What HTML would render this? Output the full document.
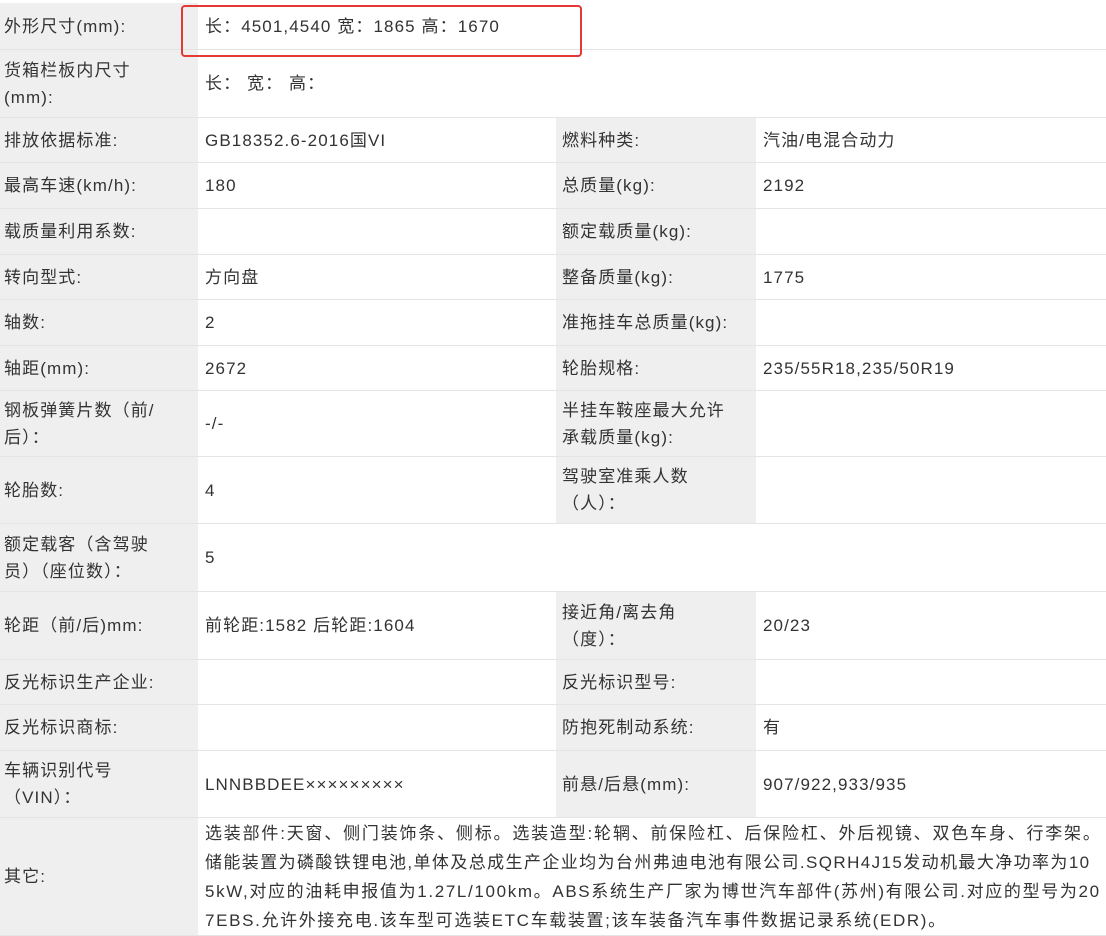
<!DOCTYPE html><html><head><meta charset="utf-8"><style>
body{margin:0;width:1106px;height:936px;background:#fff;position:relative;overflow:hidden;font-family:"Liberation Sans","Noto Sans CJK SC",sans-serif;font-size:17px;letter-spacing:1.1px;color:#333}
.c{position:absolute;display:flex;align-items:center;box-sizing:border-box;line-height:27px;border-bottom:1px solid #e4e4e4;white-space:nowrap}
.g{background:#efefef;padding-left:4px}
.w{background:#fff;padding-left:7px}
.r{position:absolute;left:181px;top:5px;width:401px;height:52px;border:2px solid #e53935;border-radius:4px;box-sizing:border-box}
</style></head><body>
<div id="t"></div>
<script>
var rows=[
[3,50,"外形尺寸(mm):","长：4501,4540 宽：1865 高：1670"],
[50,118,"货箱栏板内尺寸<br>(mm):","长： 宽： 高："],
[118,163,"排放依据标准:","GB18352.6-2016国VI","燃料种类:","汽油/电混合动力"],
[163,209,"最高车速(km/h):","180","总质量(kg):","2192"],
[209,255,"载质量利用系数:","","额定载质量(kg):",""],
[255,300,"转向型式:","方向盘","整备质量(kg):","1775"],
[300,346,"轴数:","2","准拖挂车总质量(kg):",""],
[346,391,"轴距(mm):","2672","轮胎规格:","235/55R18,235/50R19"],
[391,457,"钢板弹簧片数（前/<br>后）：","-/-","半挂车鞍座最大允许<br>承载质量(kg):",""],
[457,524,"轮胎数:","4","驾驶室准乘人数<br>（人）：",""],
[524,592,"额定载客（含驾驶<br>员）（座位数）：","5"],
[592,660,"轮距（前/后)mm:","前轮距:1582 后轮距:1604","接近角/离去角<br>（度）：","20/23"],
[660,705,"反光标识生产企业:","","反光标识型号:",""],
[705,751,"反光标识商标:","","防抱死制动系统:","有"],
[751,818,"车辆识别代号<br>（VIN）：","LNNBBDEE×××××××××","前悬/后悬(mm):","907/922,933/935"],
[818,936,"其它:","<div style='line-height:29px;letter-spacing:0'><div style='letter-spacing:1.8px'>选装部件:天窗、侧门装饰条、侧标。选装造型:轮辋、前保险杠、后保险杠、外后视镜、双色车身、行李架。</div><div style='letter-spacing:1.4px'>储能装置为磷酸铁锂电池,单体及总成生产企业均为台州弗迪电池有限公司.SQRH4J15发动机最大净功率为10</div><div style='letter-spacing:1.65px'>5kW,对应的油耗申报值为1.27L/100km。ABS系统生产厂家为博世汽车部件(苏州)有限公司.对应的型号为20</div><div style='letter-spacing:1.65px'>7EBS.允许外接充电.该车型可选装ETC车载装置;该车装备汽车事件数据记录系统(EDR)。</div></div>"]];
var h="";
rows.forEach(function(r){var t=r[0],H=r[1]-r[0];
h+='<div class="c g" style="left:0;top:'+t+'px;width:198px;height:'+H+'px">'+r[2]+'</div>';
if(r.length>4){
h+='<div class="c w" style="left:198px;top:'+t+'px;width:358px;height:'+H+'px">'+r[3]+'</div>';
h+='<div class="c g" style="left:556px;top:'+t+'px;width:200px;height:'+H+'px;padding-left:6px">'+r[4]+'</div>';
h+='<div class="c w" style="left:756px;top:'+t+'px;width:350px;height:'+H+'px">'+r[5]+'</div>';
}else{
h+='<div class="c w" style="left:198px;top:'+t+'px;width:908px;height:'+H+'px;overflow:hidden">'+r[3]+'</div>';}
});
document.getElementById("t").innerHTML=h+'<div class="r"></div>';
</script>
</body></html>
